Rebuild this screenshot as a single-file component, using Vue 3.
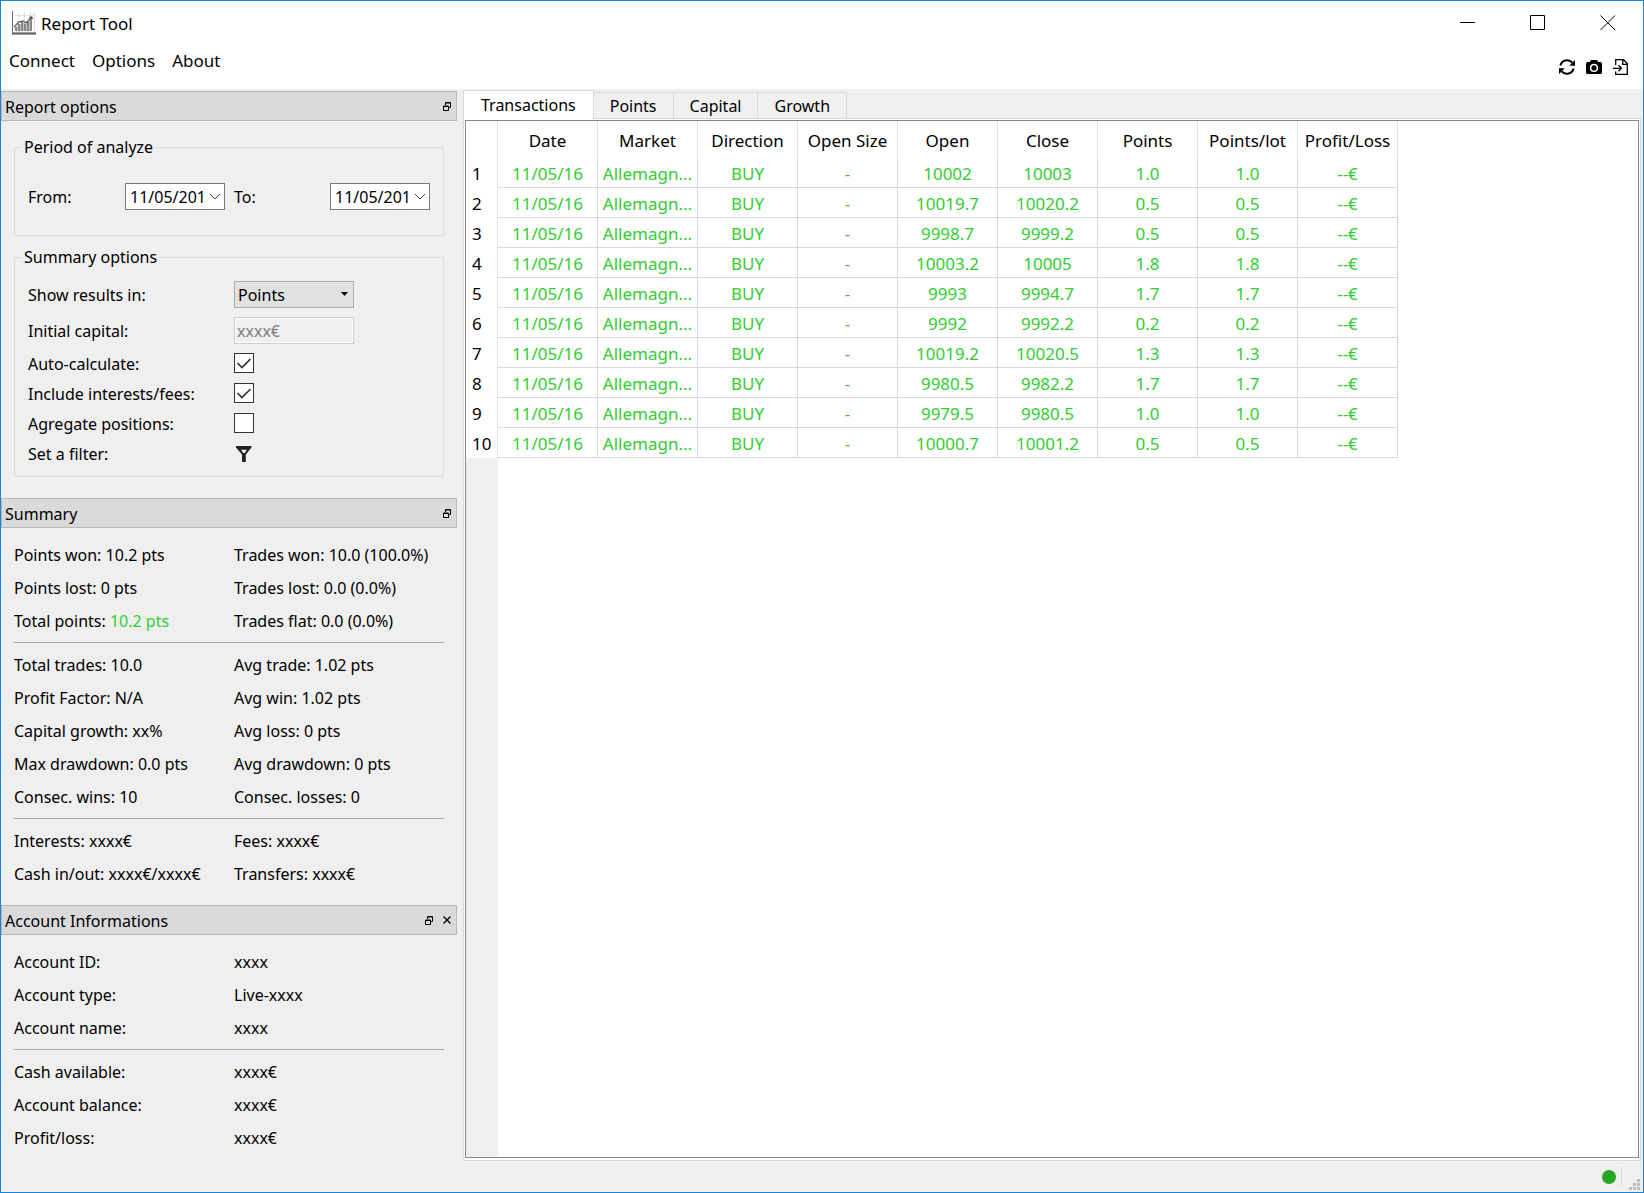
<script setup>
import { ref } from 'vue'

const menus = ['Connect', 'Options', 'About']
const tabs = ['Transactions', 'Points', 'Capital', 'Growth']
const activeTab = ref('Transactions')

const from = ref('11/05/201')
const to = ref('11/05/201')
const unit = ref('Points')
const autoCalculate = ref(true)
const includeFees = ref(true)
const aggregate = ref(false)

const summary = [
  [
    [['Points won:', '10.2 pts'], ['Trades won:', '10.0 (100.0%)']],
    [['Points lost:', '0 pts'], ['Trades lost:', '0.0 (0.0%)']],
    [['Total points:', '10.2 pts', true], ['Trades flat:', '0.0 (0.0%)']],
  ],
  [
    [['Total trades:', '10.0'], ['Avg trade:', '1.02 pts']],
    [['Profit Factor:', 'N/A'], ['Avg win:', '1.02 pts']],
    [['Capital growth:', 'xx%'], ['Avg loss:', '0 pts']],
    [['Max drawdown:', '0.0 pts'], ['Avg drawdown:', '0 pts']],
    [['Consec. wins:', '10'], ['Consec. losses:', '0']],
  ],
  [
    [['Interests:', 'xxxx€'], ['Fees:', 'xxxx€']],
    [['Cash in/out:', 'xxxx€/xxxx€'], ['Transfers:', 'xxxx€']],
  ],
]

const account = [
  [['Account ID:', 'xxxx'], ['Account type:', 'Live-xxxx'], ['Account name:', 'xxxx']],
  [['Cash available:', 'xxxx€'], ['Account balance:', 'xxxx€'], ['Profit/loss:', 'xxxx€']],
]

const columns = ['Date', 'Market', 'Direction', 'Open Size', 'Open', 'Close', 'Points', 'Points/lot', 'Profit/Loss']
const rows = [
  ['10002', '10003', '1.0'],
  ['10019.7', '10020.2', '0.5'],
  ['9998.7', '9999.2', '0.5'],
  ['10003.2', '10005', '1.8'],
  ['9993', '9994.7', '1.7'],
  ['9992', '9992.2', '0.2'],
  ['10019.2', '10020.5', '1.3'],
  ['9980.5', '9982.2', '1.7'],
  ['9979.5', '9980.5', '1.0'],
  ['10000.7', '10001.2', '0.5'],
].map(([open, close, pts]) => ['11/05/16', 'Allemagn...', 'BUY', '-', open, close, pts, pts, '--€'])
</script>

<template>
  <div class="window">
    <header class="titlebar">
      <svg class="app-icon" width="24" height="24" viewBox="0 0 24 24" aria-hidden="true">
        <path d="M3 4.500H23M3 10.500H23M6.500 1V20M12.500 1V20M18.500 1V20M22.500 1V20" stroke="#e2e2e2" fill="none" />
        <path d="M4 20V16M7 20V13M10 20V11M13 20V13M16 20V11M19 20V9" stroke="#888" stroke-width="2" fill="none" />
        <path d="M5.500 20V15M8.500 20V13M11.500 20V12M14.500 20V13M17.500 20V10" stroke="#c4c4c4" fill="none" />
        <path d="M2 16L7 11L11 10L14 12L19 7" stroke="#666" stroke-width="1.500" fill="none" />
        <circle cx="19" cy="7" r="1.800" fill="#555" />
        <path d="M0 0H1V21H24V24H0Z" fill="#9a9a9a" />
        <path d="M0.500 0V23M0 22.500H24" stroke="#6a6a6a" fill="none" />
      </svg>
      <h1>Report Tool</h1>
      <div class="window-buttons">
        <button type="button" aria-label="Minimize">
          <svg width="16" height="16" viewBox="0 0 16 16"><path d="M0 7.500H15" /></svg>
        </button>
        <button type="button" aria-label="Maximize">
          <svg width="16" height="16" viewBox="0 0 16 16"><path d="M.5 .5H14.500V14.500H.5Z" /></svg>
        </button>
        <button type="button" aria-label="Close">
          <svg width="16" height="16" viewBox="0 0 16 16"><path d="M.5 .5L15 15M15 .5L.5 15" /></svg>
        </button>
      </div>
    </header>

    <div class="menubar">
      <nav class="menus">
        <button v-for="m in menus" :key="m" type="button">{{ m }}</button>
      </nav>
      <div class="tools">
        <button type="button" aria-label="Refresh">
          <svg width="16" height="16" viewBox="0 0 16 16">
            <path d="M1.400 6.500A6.800 6.800 0 0 1 13.200 3.600M14.600 9.500A6.800 6.800 0 0 1 2.800 12.400" fill="none" stroke="#000" stroke-width="2" />
            <path d="M16 1V6.800H10.200ZM0 15V9.200H5.800Z" />
          </svg>
        </button>
        <button type="button" aria-label="Screenshot">
          <svg width="16" height="16" viewBox="0 0 16 16">
            <path fill-rule="evenodd" d="M5 1H11L12.200 3H14.500Q16 3 16 4.500V13.500Q16 15 14.500 15H1.500Q0 15 0 13.500V4.500Q0 3 1.500 3H3.800ZM8 4.800A4.100 4.100 0 1 0 8 13A4.100 4.100 0 1 0 8 4.800ZM8 6.300A2.600 2.600 0 1 1 8 11.500A2.600 2.600 0 1 1 8 6.300Z" />
          </svg>
        </button>
        <button type="button" aria-label="Export">
          <svg width="16" height="16" viewBox="0 0 16 16">
            <path d="M2.700 6V.7H10.500L14.300 4.500V15.300H2.700V12.500M9.700 .7V5.300H14.300M0 9.300H8M5.500 6.300L8.500 9.300L5.500 12.300" fill="none" stroke="#000" stroke-width="1.300" />
          </svg>
        </button>
      </div>
    </div>

    <main class="body">
      <aside class="docks">
        <section>
          <div class="dock-title">
            <h2>Report options</h2>
            <button type="button" aria-label="Float Report options">
              <svg width="8" height="9" viewBox="0 0 8 9"><path d="M2.500 3V.5H7.500V5.500H6M3 1H7M.5 4H5.500V8.500H.5ZM1 4.500H5" /></svg>
            </button>
          </div>
          <div class="options">
            <fieldset class="period">
              <legend>Period of analyze</legend>
              <div class="dates">
                <div class="date">
                  <label for="from">From:</label>
                  <div class="date-box">
                    <input id="from" v-model="from" type="text" />
                    <button type="button" aria-label="Pick start date"><svg width="12" height="8" viewBox="0 0 12 8"><path d="M1 1L6 6L11 1" /></svg></button>
                  </div>
                </div>
                <div class="date">
                  <label for="to">To:</label>
                  <div class="date-box">
                    <input id="to" v-model="to" type="text" />
                    <button type="button" aria-label="Pick end date"><svg width="12" height="8" viewBox="0 0 12 8"><path d="M1 1L6 6L11 1" /></svg></button>
                  </div>
                </div>
              </div>
            </fieldset>

            <fieldset class="summary-options">
              <legend>Summary options</legend>
              <div class="form">
                <label for="unit">Show results in:</label>
                <div class="select-box">
                  <select id="unit" v-model="unit">
                    <option>Points</option>
                  </select>
                  <svg width="7" height="4" viewBox="0 0 7 4"><path d="M0 0H7L3.500 4Z" /></svg>
                </div>
                <label for="capital">Initial capital:</label>
                <input id="capital" class="capital" type="text" value="xxxx€" disabled />
                <label for="auto">Auto-calculate:</label>
                <input id="auto" v-model="autoCalculate" type="checkbox" />
                <label for="fees">Include interests/fees:</label>
                <input id="fees" v-model="includeFees" type="checkbox" />
                <label for="aggregate">Agregate positions:</label>
                <input id="aggregate" v-model="aggregate" type="checkbox" />
                <label for="filter">Set a filter:</label>
                <button id="filter" class="filter" type="button" aria-label="Set a filter">
                  <svg width="16" height="16" viewBox="0 0 16 16"><path fill-rule="evenodd" d="M0 0H15.500V1.500L9.800 8.500V16H6V8.500L0 1.500ZM5 3.800L7.200 7H8.800L10.800 3.800Z" fill="#222" /></svg>
                </button>
              </div>
            </fieldset>
          </div>
        </section>

        <section>
          <div class="dock-title">
            <h2>Summary</h2>
            <button type="button" aria-label="Float Summary">
              <svg width="8" height="9" viewBox="0 0 8 9"><path d="M2.500 3V.5H7.500V5.500H6M3 1H7M.5 4H5.500V8.500H.5ZM1 4.500H5" /></svg>
            </button>
          </div>
          <div class="facts">
            <div v-for="(group, g) in summary" :key="g" class="group">
              <div v-for="(line, i) in group" :key="i" class="line">
                <span v-for="[name, value, gain] in line" :key="name">{{ name }} <span :class="{ gain }">{{ value }}</span></span>
              </div>
            </div>
          </div>
        </section>

        <section>
          <div class="dock-title">
            <h2>Account Informations</h2>
            <button type="button" aria-label="Float Account Informations">
              <svg width="8" height="9" viewBox="0 0 8 9"><path d="M2.500 3V.5H7.500V5.500H6M3 1H7M.5 4H5.500V8.500H.5ZM1 4.500H5" /></svg>
            </button>
            <button type="button" aria-label="Close Account Informations">
              <svg width="8" height="8" viewBox="0 0 8 8"><path d="M.5 .5L7.500 7.500M7.500 .5L.5 7.500" stroke-width="1.300" /></svg>
            </button>
          </div>
          <div class="facts last">
            <div v-for="(group, g) in account" :key="g" class="group">
              <div v-for="[name, value] in group" :key="name" class="line">
                <span>{{ name }}</span><span>{{ value }}</span>
              </div>
            </div>
          </div>
        </section>
      </aside>

      <section class="report">
        <div class="tabs" role="tablist">
          <button
            v-for="t in tabs"
            :key="t"
            type="button"
            role="tab"
            :class="{ active: t === activeTab }"
            :aria-selected="t === activeTab"
            @click="activeTab = t"
          >{{ t }}</button>
        </div>
        <div class="pane">
          <div class="view">
            <table>
              <thead>
                <tr>
                  <th class="index"></th>
                  <th v-for="c in columns" :key="c" scope="col">{{ c }}</th>
                </tr>
              </thead>
              <tbody>
                <tr v-for="(row, r) in rows" :key="r">
                  <th class="index" scope="row">{{ r + 1 }}</th>
                  <td v-for="(cell, c) in row" :key="c">{{ cell }}</td>
                </tr>
              </tbody>
            </table>
            <div class="gutter"></div>
          </div>
        </div>
      </section>
    </main>

    <footer class="statusbar">
      <span class="status-dot"></span>
      <span class="separator"></span>
      <svg class="grip" width="11" height="11" viewBox="0 0 11 11" aria-hidden="true">
        <path d="M8 0H11V3H8ZM4 4H7V7H4ZM8 4H11V7H8ZM0 8H3V11H0ZM4 8H7V11H4ZM8 8H11V11H8Z" fill="#bfbfbf" />
      </svg>
    </footer>
  </div>
</template>

<style>
body {
  margin: 0;
}
</style>

<style scoped>
* {
  box-sizing: border-box;
}

.window {
  display: flex;
  flex-direction: column;
  min-height: 100vh;
  border: 1px solid #1883d7;
  background: #efefef;
  color: #000;
  font: 16px/22px "Noto Sans", "Open Sans", sans-serif;
}

button,
input,
select {
  margin: 0;
  padding: 0;
  border: 0;
  border-radius: 0;
  background: none;
  color: inherit;
  font: inherit;
}

h1,
h2 {
  margin: 0;
  font-weight: 400;
}

/* title bar and menus */
.titlebar {
  display: flex;
  align-items: center;
  height: 44px;
  padding-left: 11px;
  background: #fff;
}

.titlebar h1 {
  flex: 1;
  padding: 2px 0 0 5px;
  font-size: 17px;
}

.window-buttons {
  display: flex;
}

.window-buttons button {
  display: flex;
  align-items: center;
  justify-content: center;
  width: 70px;
  height: 44px;
}

.window-buttons svg {
  fill: none;
  stroke: #000;
}

.menubar {
  display: flex;
  justify-content: space-between;
  height: 44px;
  padding: 0 14px 0 8px;
  background: #fff;
}

.menus {
  display: flex;
  gap: 17px;
  height: 32px;
  font-size: 17px;
}

.tools {
  display: flex;
  align-items: center;
  gap: 11px;
}

.tools button {
  display: flex;
}

.body {
  display: flex;
  flex: 1;
  gap: 6px;
  padding-right: 2px;
}

/* docks */
.docks {
  flex: 0 0 456px;
  padding-top: 2px;
}

.dock-title {
  display: flex;
  align-items: center;
  gap: 2px;
  height: 30px;
  padding: 0 1px 0 3px;
  border: 1px solid #b9b9b9;
  background: #dadada;
}

.dock-title h2 {
  flex: 1;
  padding-top: 2px;
  font-size: 16px;
}

.dock-title button {
  display: flex;
  align-items: center;
  justify-content: center;
  width: 16px;
  height: 16px;
}

.dock-title svg {
  fill: none;
  stroke: #000;
}

.options {
  display: flex;
  flex-direction: column;
  gap: 10px;
  padding: 15px 13px 21px;
}

fieldset {
  min-width: 0;
  margin: 0;
  border: 1px solid #dcdcdc;
}

legend {
  margin-left: -6px;
  padding: 0 2px;
}

.period {
  padding: 25px 13px;
}

.summary-options {
  padding: 13px 13px 12px;
}

.dates {
  display: grid;
  grid-template-columns: 197px 1fr;
  gap: 9px;
}

.date {
  display: flex;
  align-items: center;
  justify-content: space-between;
}

.date-box {
  display: flex;
  align-items: center;
  width: 100px;
  height: 27px;
  border: 1px solid #7a7a7a;
  background: #fff;
}

.date-box input {
  flex: 1;
  min-width: 0;
  padding-left: 4px;
}

.date-box button {
  display: flex;
  justify-content: center;
  width: 18px;
}

.date-box svg {
  fill: none;
  stroke: #444;
}

.form {
  display: grid;
  grid-template-columns: 206px 120px;
  grid-template-rows: 27px 27px 21px 21px 21px 21px;
  row-gap: 9px;
  align-items: center;
}

.select-box {
  position: relative;
  height: 27px;
}

.select-box select {
  width: 100%;
  height: 100%;
  padding-left: 3px;
  border: 1px solid #adadad;
  background: #e1e1e1;
  appearance: none;
}

.select-box svg {
  position: absolute;
  top: 11px;
  right: 6px;
  pointer-events: none;
}

.capital {
  width: 100%;
  height: 27px;
  padding-left: 2px;
  border: 1px solid #ccc;
  box-shadow: inset 0 0 0 1px #fff;
  color: #7d7d7d;
}

input[type="checkbox"] {
  align-self: start;
  width: 20px;
  height: 20px;
  border: 1px solid #333;
  background: #fff;
  appearance: none;
}

input[type="checkbox"]:checked {
  background: #fff url("data:image/svg+xml,%3Csvg xmlns='http://www.w3.org/2000/svg' width='18' height='18'%3E%3Cpath d='M2.500 9L7 13.500L15.500 5' fill='none' stroke='%23333' stroke-width='1.700'/%3E%3C/svg%3E") no-repeat;
}

.filter {
  display: flex;
  padding-left: 2px;
}

/* label and value lists */
.facts {
  padding: 11px 13px 14px;
}

.facts.last {
  padding-bottom: 0;
}

.group + .group {
  margin-top: 4px;
  padding-top: 6px;
  border-top: 1px solid #a9a9a9;
}

.line {
  display: grid;
  grid-template-columns: 220px 1fr;
  line-height: 33px;
  white-space: nowrap;
}

.gain {
  color: #32cd32;
}

/* report tabs */
.report {
  display: flex;
  flex: 1;
  flex-direction: column;
  min-width: 0;
  padding-top: 1px;
}

.tabs {
  display: flex;
  align-items: flex-end;
}

.tabs button {
  height: 26px;
  padding: 0 16px;
  border: 1px solid #d9d9d9;
  border-width: 1px 1px 0 0;
  background: #f0f0f0;
}

.tabs .active {
  position: relative;
  height: 29px;
  margin-bottom: -1px;
  padding: 0 17px;
  border-width: 1px 1px 0;
  background: #fff;
}

.pane {
  display: flex;
  flex: 1;
  padding: 1px 1px 2px;
  border: 1px solid #d9d9d9;
  background: #fff;
}

.view {
  display: flex;
  flex: 1;
  flex-direction: column;
  border: 1px solid #828790;
}

table {
  width: 932px;
  border-spacing: 0;
  table-layout: fixed;
  font-size: 17px;
}

th,
td {
  height: 30px;
  padding: 2px 0 0;
  border-right: 1px solid #d8d8d8;
  font-weight: 400;
  text-align: center;
  white-space: nowrap;
}

thead th {
  height: 37px;
  border-color: #e5e5e5;
}

td {
  border-bottom: 1px solid #d8d8d8;
  color: #32cd32;
}

th.index {
  width: 32px;
  padding-left: 6px;
  border-color: #e5e5e5;
  text-align: left;
}

.gutter {
  flex: 1;
  width: 32px;
  background: #efefef;
}

/* status bar */
.statusbar {
  display: flex;
  align-items: center;
  justify-content: flex-end;
  height: 31px;
  padding-right: 3px;
}

.status-dot {
  width: 14px;
  height: 14px;
  border-radius: 50%;
  background: #26a626;
}

.separator {
  width: 1px;
  height: 19px;
  margin: 0 7px 0 5px;
  background: #d7d7d7;
}

.grip {
  align-self: flex-end;
  margin-bottom: 2px;
}
</style>
